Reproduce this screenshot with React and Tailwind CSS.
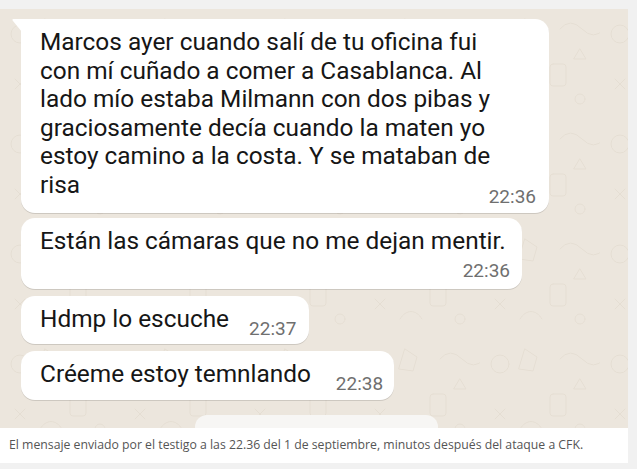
import React from "react";

function Doodles() {
  return (
    <svg className="absolute inset-0 w-full h-full" width="628" height="419">
      <defs>
        <pattern id="dd" width="120" height="110" patternUnits="userSpaceOnUse">
          <g fill="none" stroke="#e5ded3" strokeWidth="1" strokeLinecap="round">
            <circle cx="20" cy="25" r="9" />
            <path d="M45 10 l12 8 l-4 14 l-14 -2 z" />
            <path d="M80 20 q10 -12 22 0 t22 0" />
            <rect x="70" y="55" width="16" height="22" rx="3" />
            <path d="M15 70 l10 10 m0 -10 l-10 10" />
            <path d="M40 90 c6 -10 16 -10 22 0" />
            <circle cx="100" cy="90" r="5" />
            <path d="M100 40 l6 10 l-12 0 z" />
          </g>
        </pattern>
      </defs>
      <rect width="100%" height="100%" fill="url(#dd)" />
    </svg>
  );
}

export default function App() {
  const font = { fontFamily: "Roboto, 'Liberation Sans', sans-serif" };
  return (
    <div className="w-[637px] h-[469px] bg-[#f1f1f1] pt-[9px] overflow-hidden">
      <div className="w-[628px]">
        <div className="relative h-[419px] bg-[#ece6dd] overflow-hidden" style={font}>
          <Doodles />
          <div className="relative flex flex-col items-start pl-[21px] pt-[10px] text-[#161616]">
            {/* Bubble 1 */}
            <div className="relative w-[528px] bg-white rounded-[14px] rounded-tl-none shadow-[0_1px_0.5px_rgba(0,0,0,0.13)] pl-[19px] pr-[13px] pt-[9px] pb-[6px]">
              <svg className="absolute left-[-9px] top-0" width="10" height="13" viewBox="0 0 10 13">
                <path d="M10 0 L1.5 0 Q-0.5 0 1 2 L10 13 Z" fill="#ffffff" />
              </svg>
              <div className="text-[24.4px] leading-[28.6px] whitespace-nowrap">
                Marcos ayer cuando salí de tu oficina fui<br />
                con mí cuñado a comer a Casablanca. Al<br />
                lado mío estaba Milmann con dos pibas y<br />
                graciosamente decía cuando la maten yo<br />
                estoy camino a la costa. Y se mataban de<br />
                risa
              </div>
              <div className="flex justify-end -mt-[13px]">
                <span className="text-[19px] leading-[20px] text-[#6f6f6f]">22:36</span>
              </div>
            </div>

            {/* Bubble 2 */}
            <div className="mt-[5px] w-[501px] bg-white rounded-[14px] shadow-[0_1px_0.5px_rgba(0,0,0,0.13)] pl-[19px] pr-[12px] pt-[9px] pb-[8px]">
              <div className="text-[24.4px] leading-[28.6px] whitespace-nowrap">
                Están las cámaras que no me dejan mentir.
              </div>
              <div className="flex justify-end mt-[6px]">
                <span className="text-[19px] leading-[20px] text-[#6f6f6f]">22:36</span>
              </div>
            </div>

            {/* Bubble 3 */}
            <div className="mt-[7px] flex items-start bg-white rounded-[14px] shadow-[0_1px_0.5px_rgba(0,0,0,0.13)] pl-[19px] pr-[13px] pt-[9px] pb-[5px]">
              <span className="text-[24.4px] leading-[28.6px] whitespace-nowrap">Hdmp lo escuche</span>
              <span className="ml-[20px] mt-[14px] text-[19px] leading-[20px] text-[#6f6f6f]">22:37</span>
            </div>

            {/* Bubble 4 */}
            <div className="mt-[7px] flex items-start bg-white rounded-[14px] shadow-[0_1px_0.5px_rgba(0,0,0,0.13)] pl-[19px] pr-[11px] pt-[9px] pb-[6px]">
              <span className="text-[24.4px] leading-[28.6px] whitespace-nowrap">Créeme estoy temnlando</span>
              <span className="ml-[25px] mt-[14px] text-[19px] leading-[20px] text-[#6f6f6f]">22:38</span>
            </div>

            {/* Partial bubble */}
            <div className="mt-[15px] ml-[174px] w-[243px] h-[30px] bg-[#f7f6f4] rounded-[12px]" />
          </div>
          <div className="absolute left-[574px] top-[421px] w-[34px] h-[34px] rounded-full bg-[#f7f6f4]" />
        </div>
        <div className="h-[35px] bg-white flex items-center pl-[9px] text-[12.25px] text-[#555555]" style={{ fontFamily: "'Open Sans', 'Noto Sans', sans-serif" }}>
          El mensaje enviado por el testigo a las 22.36 del 1 de septiembre, minutos después del ataque a CFK.
        </div>
      </div>
    </div>
  );
}
